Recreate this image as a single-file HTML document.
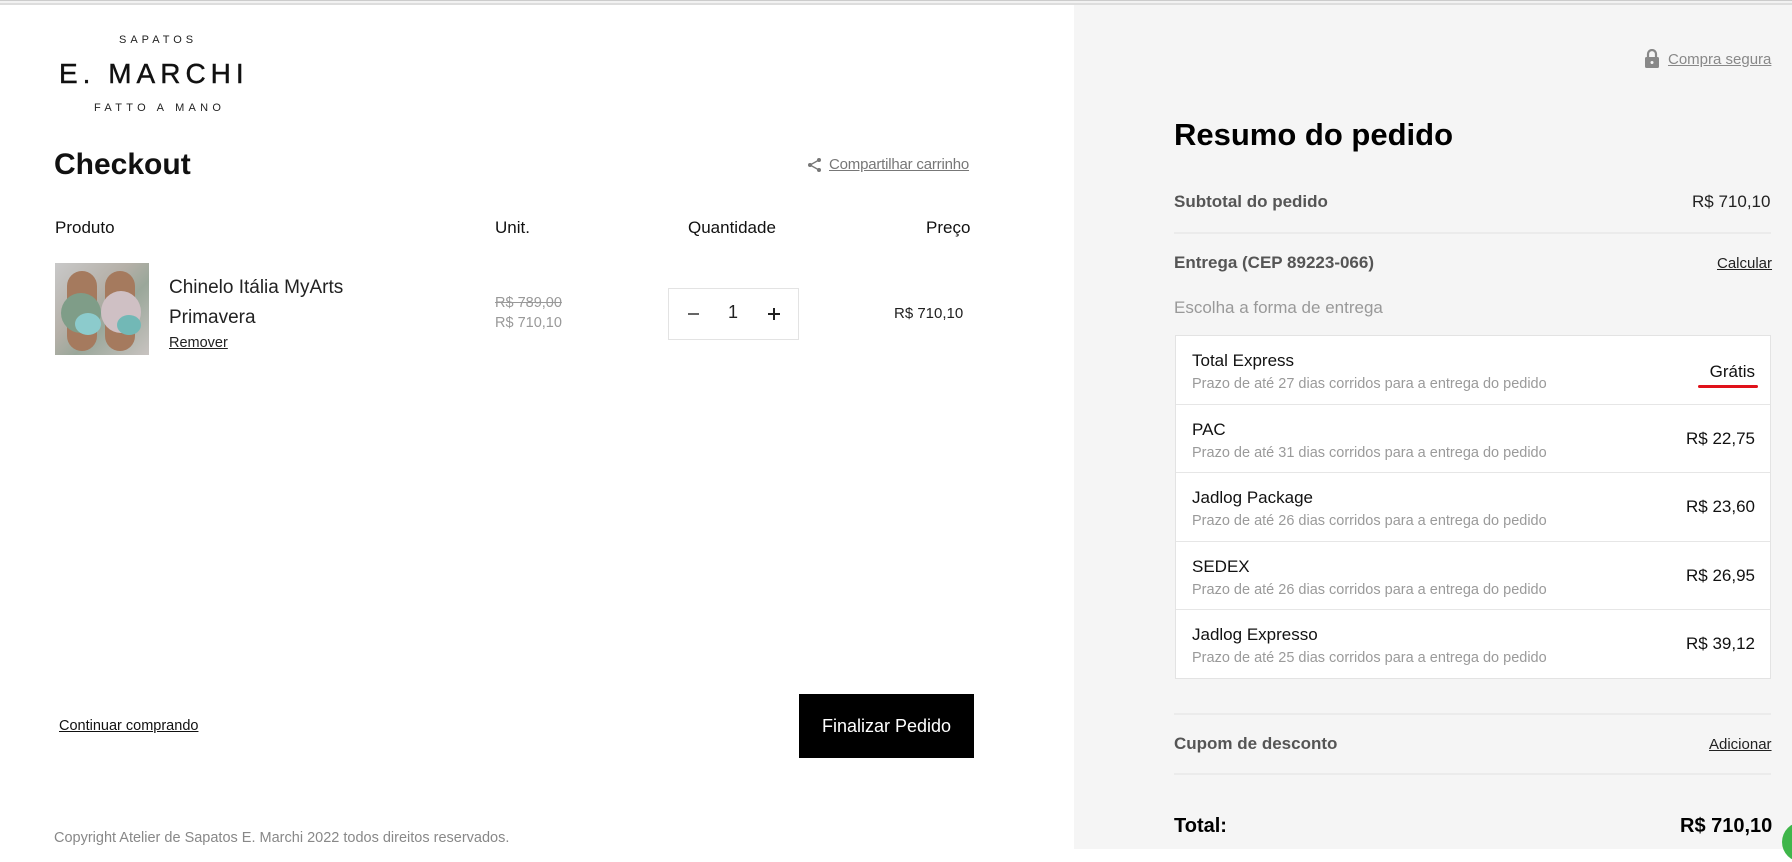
<!DOCTYPE html>
<html><head><meta charset="utf-8"><style>
*{margin:0;padding:0;box-sizing:border-box}
body{width:1792px;height:849px;overflow:hidden;background:#fff;font-family:"Liberation Sans",Arial,sans-serif;position:relative;color:#111}
.a{position:absolute;white-space:nowrap}
.topline{position:absolute;left:0;top:0;width:1792px;height:5px;border-top:1px solid #ccc;border-bottom:2px solid #ddd;background:#f2f2f2}
.right{position:absolute;left:1074px;top:5px;width:718px;height:844px;background:#f5f5f5}
.u{text-decoration:underline}
.hr{position:absolute;left:1174px;width:597px;height:2px;background:#ebebeb}
.box{position:absolute;left:1175px;top:335px;width:596px;height:344px;background:#fff;border:1px solid #e3e3e3}
.row{position:relative;height:68.6px;border-bottom:1px solid #e6e6e6}
.row:last-child{border-bottom:none}
.row .t{position:absolute;left:16px;top:15px;font-size:17px;color:#111}
.row .s{position:absolute;left:16px;top:40px;font-size:14.5px;color:#9a9a9a}
.row .p{position:absolute;right:15px;top:24px;font-size:17px;color:#111}
</style></head><body>
<div class="topline"></div>
<div class="right"></div>

<div class="a" style="left:119px;top:34px;font-size:11px;letter-spacing:4px;color:#222">SAPATOS</div>
<div class="a" style="left:59px;top:58px;font-size:28px;letter-spacing:5px;color:#111;-webkit-text-stroke:0.4px #111">E. MARCHI</div>
<div class="a" style="left:94px;top:102px;font-size:11px;letter-spacing:4.3px;color:#222">FATTO A MANO</div>

<div class="a" style="left:54px;top:148px;font-size:30px;font-weight:bold">Checkout</div>
<svg class="a" style="left:807px;top:157px" width="16" height="16" viewBox="0 0 16 16"><circle cx="12" cy="3" r="2" fill="#777"/><circle cx="3" cy="8" r="2" fill="#777"/><circle cx="12" cy="13" r="2" fill="#777"/><path d="M12 3L3 8L12 13" stroke="#777" stroke-width="1.3" fill="none"/></svg>
<div class="a u" style="left:829px;top:156px;font-size:15px;color:#777;letter-spacing:-0.2px">Compartilhar carrinho</div>

<div class="a" style="left:55px;top:218px;font-size:17px">Produto</div>
<div class="a" style="left:495px;top:218px;font-size:17px">Unit.</div>
<div class="a" style="left:688px;top:218px;font-size:17px">Quantidade</div>
<div class="a" style="left:926px;top:218px;font-size:17px">Preço</div>

<div class="a" style="left:55px;top:263px;width:94px;height:92px;background:linear-gradient(135deg,#c9c9c9,#b5b0a8 40%,#9aa79a 60%,#c8c3c0);overflow:hidden">
<div style="position:absolute;left:12px;top:8px;width:30px;height:80px;border-radius:15px;background:#a57a5e"></div>
<div style="position:absolute;left:50px;top:8px;width:30px;height:80px;border-radius:15px;background:#a57a5e"></div>
<div style="position:absolute;left:6px;top:30px;width:40px;height:40px;border-radius:50%;background:#7f9d88"></div>
<div style="position:absolute;left:46px;top:28px;width:40px;height:42px;border-radius:50%;background:#cfc0c4"></div>
<div style="position:absolute;left:20px;top:50px;width:26px;height:22px;border-radius:50%;background:#8ccbcc"></div>
<div style="position:absolute;left:62px;top:52px;width:24px;height:20px;border-radius:50%;background:#72b8b6"></div>
</div>
<div class="a" style="left:169px;top:277px;font-size:19px;color:#222">Chinelo Itália MyArts</div>
<div class="a" style="left:169px;top:307px;font-size:19px;color:#222">Primavera</div>
<div class="a u" style="left:169px;top:335px;font-size:14.5px;color:#222">Remover</div>

<div class="a" style="left:495px;top:295px;font-size:14.5px;color:#999;text-decoration:line-through">R$ 789,00</div>
<div class="a" style="left:495px;top:315px;font-size:14.5px;color:#999">R$ 710,10</div>

<div class="a" style="left:668px;top:288px;width:131px;height:52px;border:1px solid #e3e3e3;background:#fff"></div>
<div class="a" style="left:688px;top:313px;width:11px;height:1.5px;background:#666"></div>
<div class="a" style="left:728px;top:302px;font-size:18px;color:#222">1</div>
<div class="a" style="left:768px;top:313px;width:12px;height:1.5px;background:#222"></div>
<div class="a" style="left:773.3px;top:307.5px;width:1.5px;height:12px;background:#222"></div>

<div class="a" style="left:894px;top:305px;font-size:15px;color:#222">R$ 710,10</div>

<div class="a u" style="left:59px;top:718px;font-size:14.5px;color:#111">Continuar comprando</div>
<div class="a" style="left:799px;top:694px;width:175px;height:64px;background:#000;color:#fff;font-size:18px;text-align:center;line-height:64px">Finalizar Pedido</div>

<div class="a" style="left:54px;top:830px;font-size:14.5px;color:#888">Copyright Atelier de Sapatos E. Marchi 2022 todos direitos reservados.</div>

<svg class="a" style="left:1644px;top:49px" width="16" height="19" viewBox="0 0 16 19"><path d="M4 8V5a4 4 0 0 1 8 0v3" stroke="#888" stroke-width="2.2" fill="none"/><rect x="1" y="8" width="14" height="11" rx="1.5" fill="#888"/><circle cx="8" cy="13.5" r="1.5" fill="#f5f5f5"/></svg>
<div class="a u" style="left:1668px;top:51px;font-size:15px;color:#888">Compra segura</div>

<div class="a" style="left:1174px;top:117px;font-size:31px;font-weight:bold;color:#000">Resumo do pedido</div>
<div class="a" style="left:1174px;top:192px;font-size:17px;font-weight:bold;color:#555">Subtotal do pedido</div>
<div class="a" style="left:1692px;top:192px;font-size:17px;color:#222">R$ 710,10</div>
<div class="hr" style="top:232px"></div>
<div class="a" style="left:1174px;top:253px;font-size:17px;font-weight:bold;color:#555">Entrega (CEP 89223-066)</div>
<div class="a u" style="left:1717px;top:255px;font-size:15px;color:#222">Calcular</div>
<div class="a" style="left:1174px;top:298px;font-size:17px;color:#999">Escolha a forma de entrega</div>

<div class="box">
<div class="row"><div class="t">Total Express</div><div class="s">Prazo de até 27 dias corridos para a entrega do pedido</div><div class="p" style="top:26px">Grátis</div><div style="position:absolute;left:522px;top:49px;width:60px;height:3px;border-radius:2px;background:#e0121a"></div></div>
<div class="row"><div class="t">PAC</div><div class="s">Prazo de até 31 dias corridos para a entrega do pedido</div><div class="p">R$ 22,75</div></div>
<div class="row"><div class="t">Jadlog Package</div><div class="s">Prazo de até 26 dias corridos para a entrega do pedido</div><div class="p">R$ 23,60</div></div>
<div class="row"><div class="t">SEDEX</div><div class="s">Prazo de até 26 dias corridos para a entrega do pedido</div><div class="p">R$ 26,95</div></div>
<div class="row"><div class="t">Jadlog Expresso</div><div class="s">Prazo de até 25 dias corridos para a entrega do pedido</div><div class="p">R$ 39,12</div></div>
</div>

<div class="hr" style="top:713px"></div>
<div class="a" style="left:1174px;top:734px;font-size:17px;font-weight:bold;color:#555">Cupom de desconto</div>
<div class="a u" style="left:1709px;top:736px;font-size:15px;color:#222">Adicionar</div>
<div class="hr" style="top:773px"></div>
<div class="a" style="left:1174px;top:815px;font-size:20px;font-weight:bold;color:#000">Total:</div>
<div class="a" style="left:1680px;top:815px;font-size:20px;font-weight:bold;color:#000">R$ 710,10</div>
<div class="a" style="left:1782px;top:822px;width:40px;height:40px;border-radius:50%;background:#3fb64a"></div>
</body></html>
